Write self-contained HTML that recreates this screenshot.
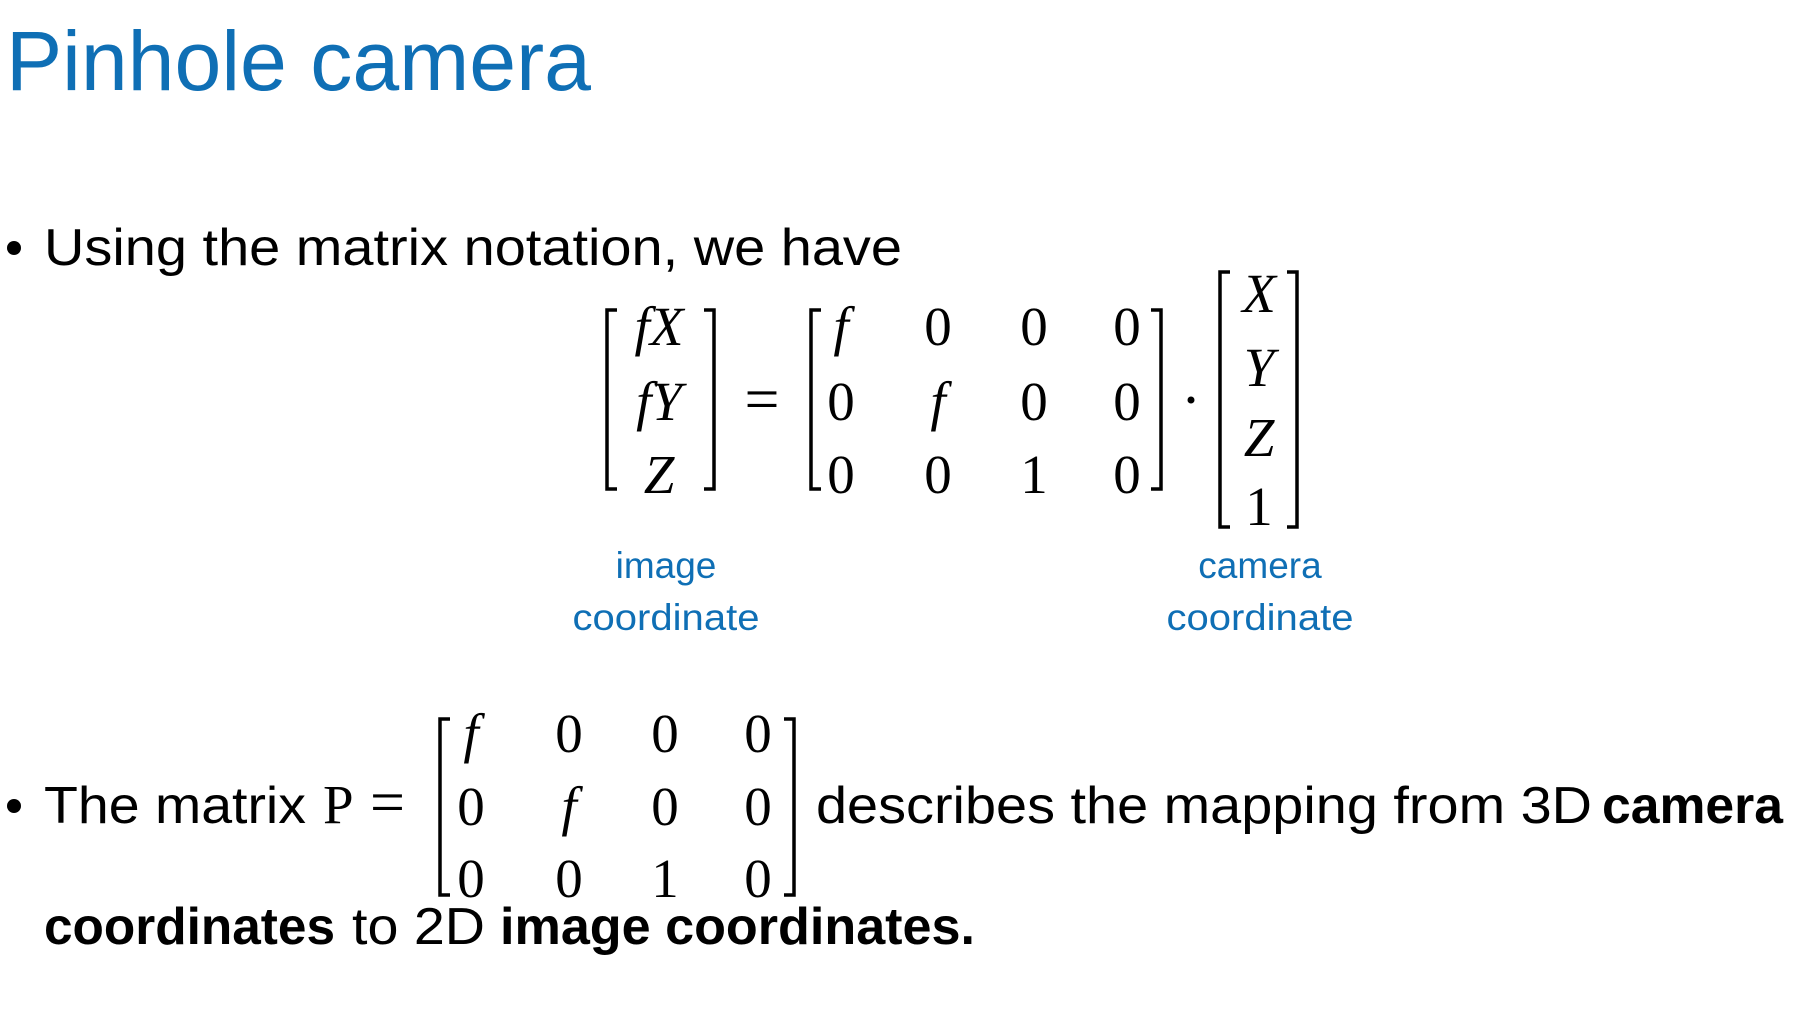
<!DOCTYPE html>
<html><head><meta charset="utf-8"><style>
html,body{margin:0;padding:0;background:#fff;}
svg{display:block}
.t{font-family:"Liberation Sans",sans-serif;fill:#000}
.m{font-family:"Liberation Serif",serif;fill:#000;font-size:55px}
.i{font-style:italic}
.b{font-weight:bold}
.blue{fill:#0f6fb5}
</style></head><body>
<svg width="1800" height="1012" viewBox="0 0 1800 1012" xmlns="http://www.w3.org/2000/svg">
<text class="t blue" x="6" y="90" font-size="84" textLength="585" lengthAdjust="spacingAndGlyphs">Pinhole camera</text>

<circle cx="14" cy="248" r="7" fill="#000"/>
<text class="t" x="44" y="265" font-size="52" textLength="858" lengthAdjust="spacingAndGlyphs">Using the matrix notation, we have</text>

<g transform="translate(-5,0)">
<g fill="none" stroke="#000" stroke-width="3.5">
<path d="M622 310 H612 V489 H622"/>
<path d="M709 310 H719 V489 H709"/>
<path d="M826 310 H816 V489 H826"/>
<path d="M1156 310 H1166 V489 H1156"/>
<path d="M1235 272 H1225 V527 H1235"/>
<path d="M1292 272 H1302 V527 H1292"/>
</g>
<g class="m">
<text class="i" x="664" y="345" text-anchor="middle">fX</text>
<text class="i" x="664" y="420" text-anchor="middle">fY</text>
<text class="i" x="664" y="493" text-anchor="middle">Z</text>
<text x="767" y="420" text-anchor="middle" font-size="62">=</text>
<text class="i" x="846" y="345" text-anchor="middle">f</text>
<text x="943" y="345" text-anchor="middle">0</text>
<text x="1039" y="345" text-anchor="middle">0</text>
<text x="1132" y="345" text-anchor="middle">0</text>
<text x="846" y="420" text-anchor="middle">0</text>
<text class="i" x="943" y="420" text-anchor="middle">f</text>
<text x="1039" y="420" text-anchor="middle">0</text>
<text x="1132" y="420" text-anchor="middle">0</text>
<text x="846" y="493" text-anchor="middle">0</text>
<text x="943" y="493" text-anchor="middle">0</text>
<text x="1039" y="493" text-anchor="middle">1</text>
<text x="1132" y="493" text-anchor="middle">0</text>
<text class="i" x="1264" y="312" text-anchor="middle">X</text>
<text class="i" x="1264" y="386" text-anchor="middle">Y</text>
<text class="i" x="1264" y="456" text-anchor="middle">Z</text>
<text x="1264" y="525" text-anchor="middle">1</text>
</g>
<circle cx="1196" cy="400" r="3.5" fill="#000"/>
</g>

<g class="t blue" font-size="37" text-anchor="middle">
<text x="666" y="578">image</text>
<text x="666" y="630" textLength="187" lengthAdjust="spacingAndGlyphs">coordinate</text>
<text x="1260" y="578">camera</text>
<text x="1260" y="630" textLength="187" lengthAdjust="spacingAndGlyphs">coordinate</text>
</g>

<circle cx="14" cy="806" r="7" fill="#000"/>
<text class="t" x="44" y="823" font-size="52" textLength="262" lengthAdjust="spacingAndGlyphs">The matrix</text>
<g class="m">
<text x="323" y="823">P</text>
<text x="370" y="823" font-size="62">=</text>
<g fill="none" stroke="#000" stroke-width="3.5">
<path d="M450 719 H440 V895 H450"/>
<path d="M784 719 H794 V895 H784"/>
</g>
<text class="i" x="471" y="752" text-anchor="middle">f</text>
<text x="569" y="752" text-anchor="middle">0</text>
<text x="665" y="752" text-anchor="middle">0</text>
<text x="758" y="752" text-anchor="middle">0</text>
<text x="471" y="825" text-anchor="middle">0</text>
<text class="i" x="569" y="825" text-anchor="middle">f</text>
<text x="665" y="825" text-anchor="middle">0</text>
<text x="758" y="825" text-anchor="middle">0</text>
<text x="471" y="897" text-anchor="middle">0</text>
<text x="569" y="897" text-anchor="middle">0</text>
<text x="665" y="897" text-anchor="middle">1</text>
<text x="758" y="897" text-anchor="middle">0</text>
</g>
<text class="t" x="816" y="823" font-size="52" textLength="776" lengthAdjust="spacingAndGlyphs">describes the mapping from 3D</text>
<text class="t b" x="1602" y="823" font-size="52" textLength="181" lengthAdjust="spacingAndGlyphs">camera</text>

<text class="t b" x="44" y="944" font-size="52" textLength="291" lengthAdjust="spacingAndGlyphs">coordinates</text>
<text class="t" x="352" y="944" font-size="52" textLength="133" lengthAdjust="spacingAndGlyphs">to 2D</text>
<text class="t b" x="500" y="944" font-size="52" textLength="475" lengthAdjust="spacingAndGlyphs">image coordinates.</text>
</svg>
</body></html>
